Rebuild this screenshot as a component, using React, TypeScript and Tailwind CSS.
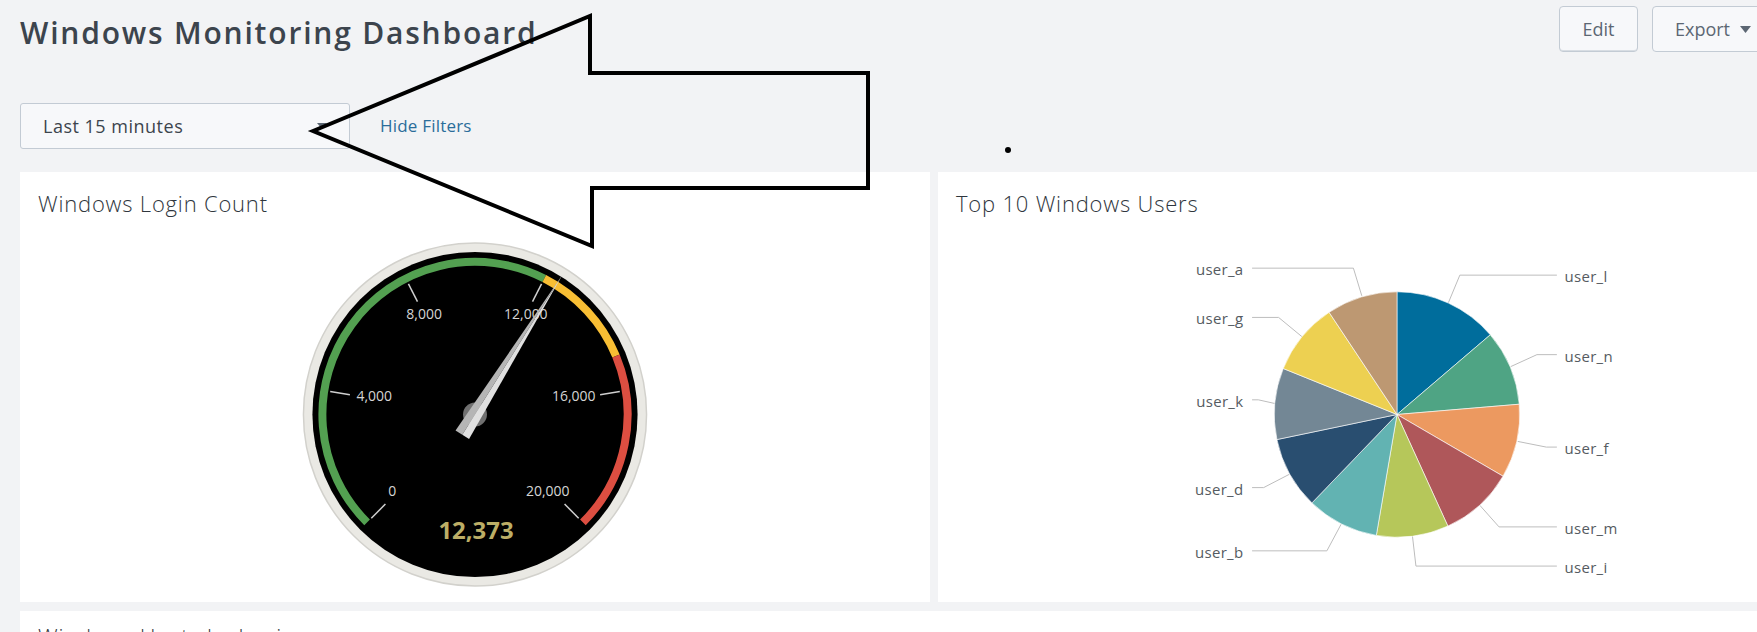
import React from "react";

const rad = (d: number) => (d * Math.PI) / 180;
const pt = (cx: number, cy: number, r: number, deg: number): [number, number] => [
  cx + r * Math.sin(rad(deg)),
  cy - r * Math.cos(rad(deg)),
];

function arc(cx: number, cy: number, r: number, a0: number, a1: number) {
  const [x0, y0] = pt(cx, cy, r, a0);
  const [x1, y1] = pt(cx, cy, r, a1);
  const large = a1 - a0 > 180 ? 1 : 0;
  return `M ${x0} ${y0} A ${r} ${r} 0 ${large} 1 ${x1} ${y1}`;
}

function slice(cx: number, cy: number, r: number, a0: number, a1: number) {
  const [x0, y0] = pt(cx, cy, r, a0);
  const [x1, y1] = pt(cx, cy, r, a1);
  const large = a1 - a0 > 180 ? 1 : 0;
  return `M ${cx} ${cy} L ${x0} ${y0} A ${r} ${r} 0 ${large} 1 ${x1} ${y1} Z`;
}

const FONT = "font-['Open_Sans',sans-serif]";

// gauge: 0..20000 over -135..135 deg
const G = { cx: 455, cy: 199 };
const toAngle = (v: number) => -135 + (v / 20000) * 270;

const TICKS = [
  { v: 0, label: "0", dx: -83, dy: 77 },
  { v: 4000, label: "4,000", dx: -101, dy: -19 },
  { v: 8000, label: "8,000", dx: -51, dy: -101 },
  { v: 12000, label: "12,000", dx: 51, dy: -101 },
  { v: 16000, label: "16,000", dx: 99, dy: -19 },
  { v: 20000, label: "20,000", dx: 73, dy: 77 },
];

function Gauge({ value }: { value: number }) {
  const { cx, cy } = G;
  const a = toAngle(value);
  const ux = Math.sin(rad(a));
  const uy = -Math.cos(rad(a));
  const px = Math.cos(rad(a));
  const py = Math.sin(rad(a));
  const tip = [cx + 166 * ux, cy + 166 * uy];
  const base = [cx - 24 * ux, cy - 24 * uy];
  const bl = [base[0] - 8 * px, base[1] - 8 * py];
  const br = [base[0] + 8 * px, base[1] + 8 * py];
  return (
    <svg viewBox="0 0 910 387" className="block h-[387px] w-full">
      <circle cx={cx} cy={cy} r={172} fill="#eae9e4" stroke="#d2d1cc" strokeWidth={1.5} />
      <circle cx={cx} cy={cy} r={163} fill="#000" />
      <path d={arc(cx, cy, 153, -135, 27)} stroke="#53a051" strokeWidth={8} fill="none" />
      <path d={arc(cx, cy, 153, 27, 67.5)} stroke="#f8be34" strokeWidth={8} fill="none" />
      <path d={arc(cx, cy, 153, 67.5, 135)} stroke="#dc4e41" strokeWidth={8} fill="none" />
      {TICKS.map((t) => {
        const ang = toAngle(t.v);
        const [x0, y0] = pt(cx, cy, 127, ang);
        const [x1, y1] = pt(cx, cy, 147, ang);
        return (
          <g key={t.v}>
            <line x1={x0} y1={y0} x2={x1} y2={y1} stroke="#cfcfcf" strokeWidth={1.5} />
            <text
              x={cx + t.dx}
              y={cy + t.dy + 5}
              textAnchor="middle"
              fill="#d4d4d4"
              fontSize={14}
              fontFamily="'Open Sans', sans-serif"
            >
              {t.label}
            </text>
          </g>
        );
      })}
      <circle cx={cx} cy={cy} r={12} fill="#707070" />
      <polygon points={`${tip[0]},${tip[1]} ${base[0]},${base[1]} ${bl[0]},${bl[1]}`} fill="#b5b5b5" />
      <polygon points={`${tip[0]},${tip[1]} ${base[0]},${base[1]} ${br[0]},${br[1]}`} fill="#e0e0e0" />
      <text
        x={cx + 1}
        y={cy + 125}
        textAnchor="middle"
        fill="#bcae66"
        fontSize={24}
        fontWeight={700}
        fontFamily="'Open Sans', sans-serif"
      >
        12,373
      </text>
    </svg>
  );
}

// pie, coordinates taken in page space then shifted into the panel
const OX = 938;
const OY = 215;
const P = { cx: 1397 - OX, cy: 414 - OY, r: 123 };

const SLICES = [
  { name: "user_l", a0: 0, a1: 49.5, color: "#006d9c" },
  { name: "user_n", a0: 49.5, a1: 85.2, color: "#4fa484" },
  { name: "user_f", a0: 85.2, a1: 120.2, color: "#ec9960" },
  { name: "user_m", a0: 120.2, a1: 155.5, color: "#af575a" },
  { name: "user_i", a0: 155.5, a1: 189.7, color: "#b6c75a" },
  { name: "user_b", a0: 189.7, a1: 223.9, color: "#62b3b2" },
  { name: "user_d", a0: 223.9, a1: 258.2, color: "#294e70" },
  { name: "user_k", a0: 258.2, a1: 292, color: "#738795" },
  { name: "user_g", a0: 292, a1: 326.4, color: "#edd051" },
  { name: "user_a", a0: 326.4, a1: 360, color: "#bd9872" },
];

const LABELS: { name: string; side: "l" | "r"; pts: number[][] }[] = [
  { name: "user_a", side: "l", pts: [[1361.7, 295], [1353.3, 267.3], [1251.7, 267.3]] },
  { name: "user_g", side: "l", pts: [[1301.7, 336], [1278.3, 316.7], [1251.7, 316.7]] },
  { name: "user_k", side: "l", pts: [[1274.5, 403], [1258, 399.3], [1251.7, 399.3]] },
  { name: "user_d", side: "l", pts: [[1289, 474], [1263.3, 487.3], [1251.7, 487.3]] },
  { name: "user_b", side: "l", pts: [[1341, 524], [1326.7, 550.7], [1251.7, 550.7]] },
  { name: "user_l", side: "r", pts: [[1448.5, 302], [1460, 274.3], [1557.3, 274.3]] },
  { name: "user_n", side: "r", pts: [[1511, 366], [1537.3, 354], [1557.3, 354]] },
  { name: "user_f", side: "r", pts: [[1518, 441], [1546.7, 446.7], [1557.3, 446.7]] },
  { name: "user_m", side: "r", pts: [[1480, 505], [1499.3, 526.7], [1557.3, 526.7]] },
  { name: "user_i", side: "r", pts: [[1412.5, 536], [1416, 566], [1557.3, 566]] },
];

function Pie() {
  return (
    <svg viewBox="0 0 918 387" className="block h-[387px] w-full">
      {LABELS.map((l) => {
        const pts = l.pts.map(([x, y]) => `${x - OX},${y - OY}`).join(" ");
        const end = l.pts[2];
        return (
          <g key={l.name}>
            <polyline points={pts} fill="none" stroke="#bdbdbd" strokeWidth={1} />
            <text
              x={l.side === "l" ? 1243 - OX : 1565 - OX}
              y={end[1] - OY + 7}
              textAnchor={l.side === "l" ? "end" : "start"}
              fill="#555b61"
              fontSize={15}
              letterSpacing={0.3}
              fontFamily="'Open Sans', sans-serif"
            >
              {l.name}
            </text>
          </g>
        );
      })}
      {SLICES.map((s) => (
        <path
          key={s.name}
          d={slice(P.cx, P.cy, P.r, s.a0, s.a1)}
          fill={s.color}
          stroke="#ffffff"
          strokeWidth={0.6}
        />
      ))}
    </svg>
  );
}

function Panel({ title, children }: { title: string; children?: React.ReactNode }) {
  return (
    <div className="flex h-[430px] flex-col bg-white">
      <div className="px-[18px] pt-[18px] text-[22px] font-light leading-[26px] tracking-[0.8px] text-[#2f363d]">
        {title}
      </div>
      {children}
    </div>
  );
}

export default function App() {
  return (
    <div className={`relative h-[632px] w-[1757px] overflow-hidden bg-[#f2f3f5] ${FONT}`}>
      <div className="w-[1876px] px-5">
        {/* header */}
        <div className="flex h-[52px] items-start justify-between pt-[6px]">
          <h1 className="mt-[10px] text-[30px] font-semibold leading-[34px] tracking-[1.8px] text-[#3c444d]">
            Windows Monitoring Dashboard
          </h1>
          <div className="flex gap-[14px]">
            <button className="h-[46px] w-[79px] rounded-[4px] border border-[#c3cbd4] bg-[#f7f8fa] text-[18px] text-[#5c6773] shadow-[inset_0_-1px_0_#d8dde3]">
              Edit
            </button>
            <button className="flex h-[46px] w-[120px] items-center gap-[10px] rounded-[4px] border border-[#c3cbd4] bg-[#f7f8fa] pl-[22px] text-[18px] text-[#5c6773]">
              Export
              <svg width="11" height="7" viewBox="0 0 11 7">
                <path d="M0 0 H11 L5.5 7 Z" fill="#5c6773" />
              </svg>
            </button>
            <button className="h-[46px] w-[70px] rounded-[4px] border border-[#c3cbd4] bg-[#f7f8fa] text-[18px] text-[#5c6773]">
              ...
            </button>
          </div>
        </div>

        {/* filters */}
        <div className="mt-[51px] flex items-center gap-[30px]">
          <div className="flex h-[46px] w-[330px] items-center justify-between rounded-[3px] border border-[#c3cbd4] bg-[#f7f8fa] pl-[22px] pr-[22px]">
            <span className="text-[18px] tracking-[0.5px] text-[#3c444d]">Last 15 minutes</span>
            <svg width="10" height="6" viewBox="0 0 10 6">
              <path d="M0 0 H10 L5 6 Z" fill="#5c6773" />
            </svg>
          </div>
          <span className="text-[17px] tracking-[0.2px] text-[#2a6d9a]">Hide Filters</span>
        </div>

        {/* panels */}
        <div className="mt-[23px] grid grid-cols-[910px_918px] gap-2">
          <Panel title="Windows Login Count">
            <Gauge value={12373} />
          </Panel>
          <Panel title="Top 10 Windows Users">
            <Pie />
          </Panel>
        </div>
        <div className="mt-[9px] h-[200px] bg-white px-[18px] pt-[12px] text-[22px] font-light leading-[26px] tracking-[0.8px] text-[#2f363d]">
          Windows Hosts by Login
        </div>
      </div>

      {/* annotation drawn on top of the screenshot */}
      <svg className="pointer-events-none absolute inset-0" width="1757" height="632" viewBox="0 0 1757 632">
        <polygon
          points="313,131 590,16 590,73 868,73 868,188 592,188 592,246"
          fill="none"
          stroke="#000"
          strokeWidth={4}
        />
        <circle cx={1008} cy={150} r={3} fill="#000" />
      </svg>
    </div>
  );
}
